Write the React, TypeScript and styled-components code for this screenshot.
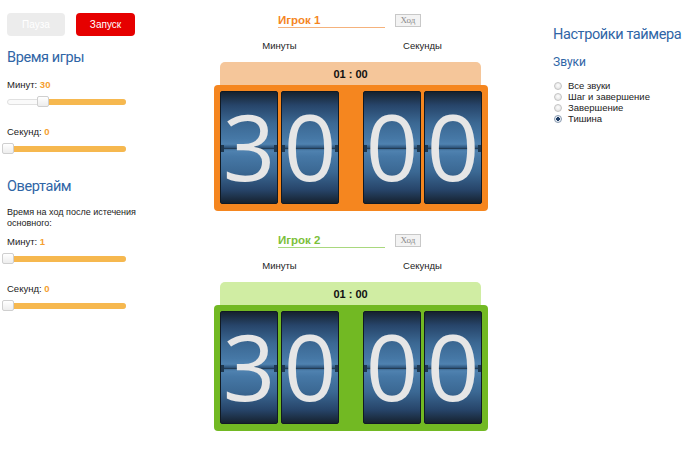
import styled, { createGlobalStyle } from 'styled-components';

const GlobalStyle = createGlobalStyle`
  body {
    margin: 0;
    background: #fff;
    font-family: 'Liberation Sans', Arial, sans-serif;
    color: #222;
  }
`;

type Tone = 'orange' | 'green';

const tones = {
  orange: { main: '#f5861f', light: '#f5c69a', name: '#f5861f', line: '#f5b27c' },
  green: { main: '#72b923', light: '#d0eda3', name: '#7cc03a', line: '#a9d87e' },
};

const Page = styled.div`
  display: flex;
  align-items: flex-start;
  padding: 13px 0 0 7px;
`;

const LeftColumn = styled.div`
  width: 128px;
  display: flex;
  flex-direction: column;
`;

const ButtonRow = styled.div`
  display: flex;
  gap: 11px;
`;

const ActionButton = styled.button<{ $primary?: boolean }>`
  width: ${(p) => (p.$primary ? 59 : 58)}px;
  height: 23px;
  border: 0;
  border-radius: 4px;
  background: ${(p) => (p.$primary ? '#e60000' : '#ececec')};
  color: #fff;
  font-family: 'Liberation Sans', Arial, sans-serif;
  font-size: 10px;
  padding: 0;
`;

const Heading = styled.h2<{ $mt: number }>`
  margin: ${(p) => p.$mt}px 0 0;
  font-family: Roboto, 'Liberation Sans', sans-serif;
  font-weight: 400;
  font-size: 14.5px;
  letter-spacing: -0.4px;
  line-height: 20px;
  color: #2f65a6;
  white-space: nowrap;
`;

const SubHeading = styled.h3`
  margin: 9px 0 0;
  font-family: Roboto, 'Liberation Sans', sans-serif;
  font-weight: 400;
  font-size: 12px;
  line-height: 16px;
  color: #2f65a6;
`;

const Field = styled.div<{ $mt: number }>`
  margin-top: ${(p) => p.$mt}px;
  display: flex;
  flex-direction: column;
  gap: 5px;
`;

const FieldLabel = styled.div`
  font-size: 9.5px;
  line-height: 12px;
  color: #222;
`;

const Value = styled.span`
  color: #f5a030;
  font-weight: bold;
`;

const Note = styled.p`
  margin: 10px 0 0;
  font-size: 9px;
  line-height: 11px;
  color: #222;
  white-space: nowrap;
`;

const SliderWrap = styled.div`
  position: relative;
  height: 12px;
  display: flex;
  align-items: center;
`;

const Track = styled.div`
  position: relative;
  width: 119px;
  height: 6px;
  border: 1px solid #e0e0e0;
  border-radius: 3px;
  background: #fafafa;
  box-sizing: border-box;
`;

const Range = styled.div`
  position: absolute;
  top: -1px;
  bottom: -1px;
  right: -1px;
  background: #f6b84f;
  border-radius: 0 3px 3px 0;
`;

const Handle = styled.div`
  position: absolute;
  top: -4px;
  width: 12px;
  height: 11px;
  margin-left: -6px;
  box-sizing: border-box;
  border: 1px solid #cfcfcf;
  border-radius: 2px;
  background: linear-gradient(#ffffff, #ededed);
`;

function Slider({ value, max }: { value: number; max: number }) {
  const pct = (value / max) * 100;
  return (
    <SliderWrap>
      <Track>
        <Range style={{ left: `${pct}%` }} />
        <Handle style={{ left: `${pct}%` }} />
      </Track>
    </SliderWrap>
  );
}

const CenterColumn = styled.div`
  margin-left: 79px;
  width: 274px;
  display: flex;
  flex-direction: column;
`;

const PlayerBlock = styled.div<{ $mt: number }>`
  margin-top: ${(p) => p.$mt}px;
  display: flex;
  flex-direction: column;
`;

const NameRow = styled.div`
  display: flex;
  align-items: flex-start;
  gap: 10px;
  padding-left: 64px;
`;

const NameInput = styled.div<{ $tone: Tone }>`
  width: 107px;
  height: 14px;
  border-bottom: 1px solid ${(p) => tones[p.$tone].line};
  color: ${(p) => tones[p.$tone].name};
  font-weight: bold;
  font-size: 11.5px;
  line-height: 14px;
`;

const MoveButton = styled.button`
  margin-top: 1px;
  width: 26px;
  height: 13px;
  padding: 0;
  border: 1px solid #c8c8c8;
  background: #f3f3f3;
  color: #888;
  font-family: 'Liberation Serif', serif;
  font-size: 9px;
  line-height: 11px;
`;

const UnitRow = styled.div`
  margin-top: 12px;
  padding: 0 6px;
  display: grid;
  grid-template-columns: 119px 119px;
  column-gap: 24px;
  font-size: 9.5px;
  line-height: 12px;
  text-align: center;
`;

const TimeBar = styled.div<{ $tone: Tone }>`
  margin: 10px 7px 0 6px;
  height: 23px;
  border-radius: 5px 5px 0 0;
  background: ${(p) => tones[p.$tone].light};
  display: flex;
  align-items: center;
  justify-content: center;
  font-weight: bold;
  font-size: 11px;
  color: #111;
`;

const Frame = styled.div<{ $tone: Tone }>`
  background: ${(p) => tones[p.$tone].main};
  border-radius: 4px;
  padding: 6px 6px 7px;
  display: flex;
  gap: 24px;
`;

const Pair = styled.div`
  display: flex;
  gap: 3px;
`;

const Card = styled.div`
  position: relative;
  width: 58px;
  height: 113px;
  box-sizing: border-box;
  border: 1px solid #111a24;
  border-radius: 2px;
  background: linear-gradient(
    to bottom,
    #16222f 0%,
    #27456a 12%,
    #3b6893 28%,
    #4678a6 42%,
    #4f82b0 47%,
    #2f557b 50%,
    #4f82b0 53%,
    #4678a6 58%,
    #3b6893 72%,
    #27456a 88%,
    #16222f 100%
  );
  display: flex;
  align-items: center;
  justify-content: center;
  &::before {
    content: '';
    position: absolute;
    left: 0;
    right: 0;
    top: 50%;
    height: 1px;
    background: rgba(20, 35, 50, 0.6);
  }
  &::after {
    content: '';
    position: absolute;
    left: 0;
    right: 0;
    top: calc(50% - 3px);
    height: 7px;
    background: linear-gradient(
      to right,
      #1e3850 0,
      #1e3850 3px,
      transparent 3px,
      transparent calc(100% - 3px),
      #1e3850 calc(100% - 3px)
    );
  }
`;

const Digit = styled.span`
  position: relative;
  z-index: 1;
  font-family: 'Open Sans', sans-serif;
  font-size: 92px;
  line-height: 100px;
  color: #e6e6e6;
  margin-top: -4px;
`;

function Player({ name, tone, mt }: { name: string; tone: Tone; mt: number }) {
  return (
    <PlayerBlock $mt={mt}>
      <NameRow>
        <NameInput $tone={tone}>{name}</NameInput>
        <MoveButton>Ход</MoveButton>
      </NameRow>
      <UnitRow>
        <div>Минуты</div>
        <div>Секунды</div>
      </UnitRow>
      <TimeBar $tone={tone}>01 : 00</TimeBar>
      <Frame $tone={tone}>
        <Pair>
          <Card><Digit>3</Digit></Card>
          <Card><Digit>0</Digit></Card>
        </Pair>
        <Pair>
          <Card><Digit>0</Digit></Card>
          <Card><Digit>0</Digit></Card>
        </Pair>
      </Frame>
    </PlayerBlock>
  );
}

const RightColumn = styled.div`
  margin-left: 65px;
  display: flex;
  flex-direction: column;
`;

const RadioList = styled.div`
  margin-top: 10px;
  display: flex;
  flex-direction: column;
`;

const RadioItem = styled.label`
  display: flex;
  align-items: center;
  gap: 6px;
  padding-left: 1px;
  height: 11px;
  font-size: 9.5px;
  color: #222;
`;

const RadioDot = styled.input`
  appearance: none;
  margin: 0;
  width: 8px;
  height: 8px;
  border-radius: 50%;
  border: 1px solid #c4c4c4;
  background: radial-gradient(circle at 50% 40%, #fdfdfd, #dcdcdc);
  box-sizing: border-box;
  &:checked {
    border-color: #8a9bb0;
    background: radial-gradient(circle, #1f3e66 0 1.6px, #e9eef4 2px);
  }
`;

const sounds = ['Все звуки', 'Шаг и завершение', 'Завершение', 'Тишина'];

export default function App() {
  return (
    <>
      <GlobalStyle />
      <Page>
        <LeftColumn>
          <ButtonRow>
            <ActionButton>Пауза</ActionButton>
            <ActionButton $primary>Запуск</ActionButton>
          </ButtonRow>
          <Heading $mt={12}>Время игры</Heading>
          <Field $mt={11}>
            <FieldLabel>Минут: <Value>30</Value></FieldLabel>
            <Slider value={30} max={100} />
          </Field>
          <Field $mt={18}>
            <FieldLabel>Секунд: <Value>0</Value></FieldLabel>
            <Slider value={0} max={59} />
          </Field>
          <Heading $mt={22}>Овертайм</Heading>
          <Note>
            Время на ход после истечения
            <br />
            основного:
          </Note>
          <Field $mt={7}>
            <FieldLabel>Минут: <Value>1</Value></FieldLabel>
            <Slider value={0} max={60} />
          </Field>
          <Field $mt={18}>
            <FieldLabel>Секунд: <Value>0</Value></FieldLabel>
            <Slider value={0} max={59} />
          </Field>
        </LeftColumn>
        <CenterColumn>
          <Player name="Игрок 1" tone="orange" mt={0} />
          <Player name="Игрок 2" tone="green" mt={22} />
        </CenterColumn>
        <RightColumn>
          <Heading $mt={12}>Настройки таймера</Heading>
          <SubHeading>Звуки</SubHeading>
          <RadioList>
            {sounds.map((s, i) => (
              <RadioItem key={s}>
                <RadioDot type="radio" name="sound" defaultChecked={i === 3} />
                {s}
              </RadioItem>
            ))}
          </RadioList>
        </RightColumn>
      </Page>
    </>
  );
}
